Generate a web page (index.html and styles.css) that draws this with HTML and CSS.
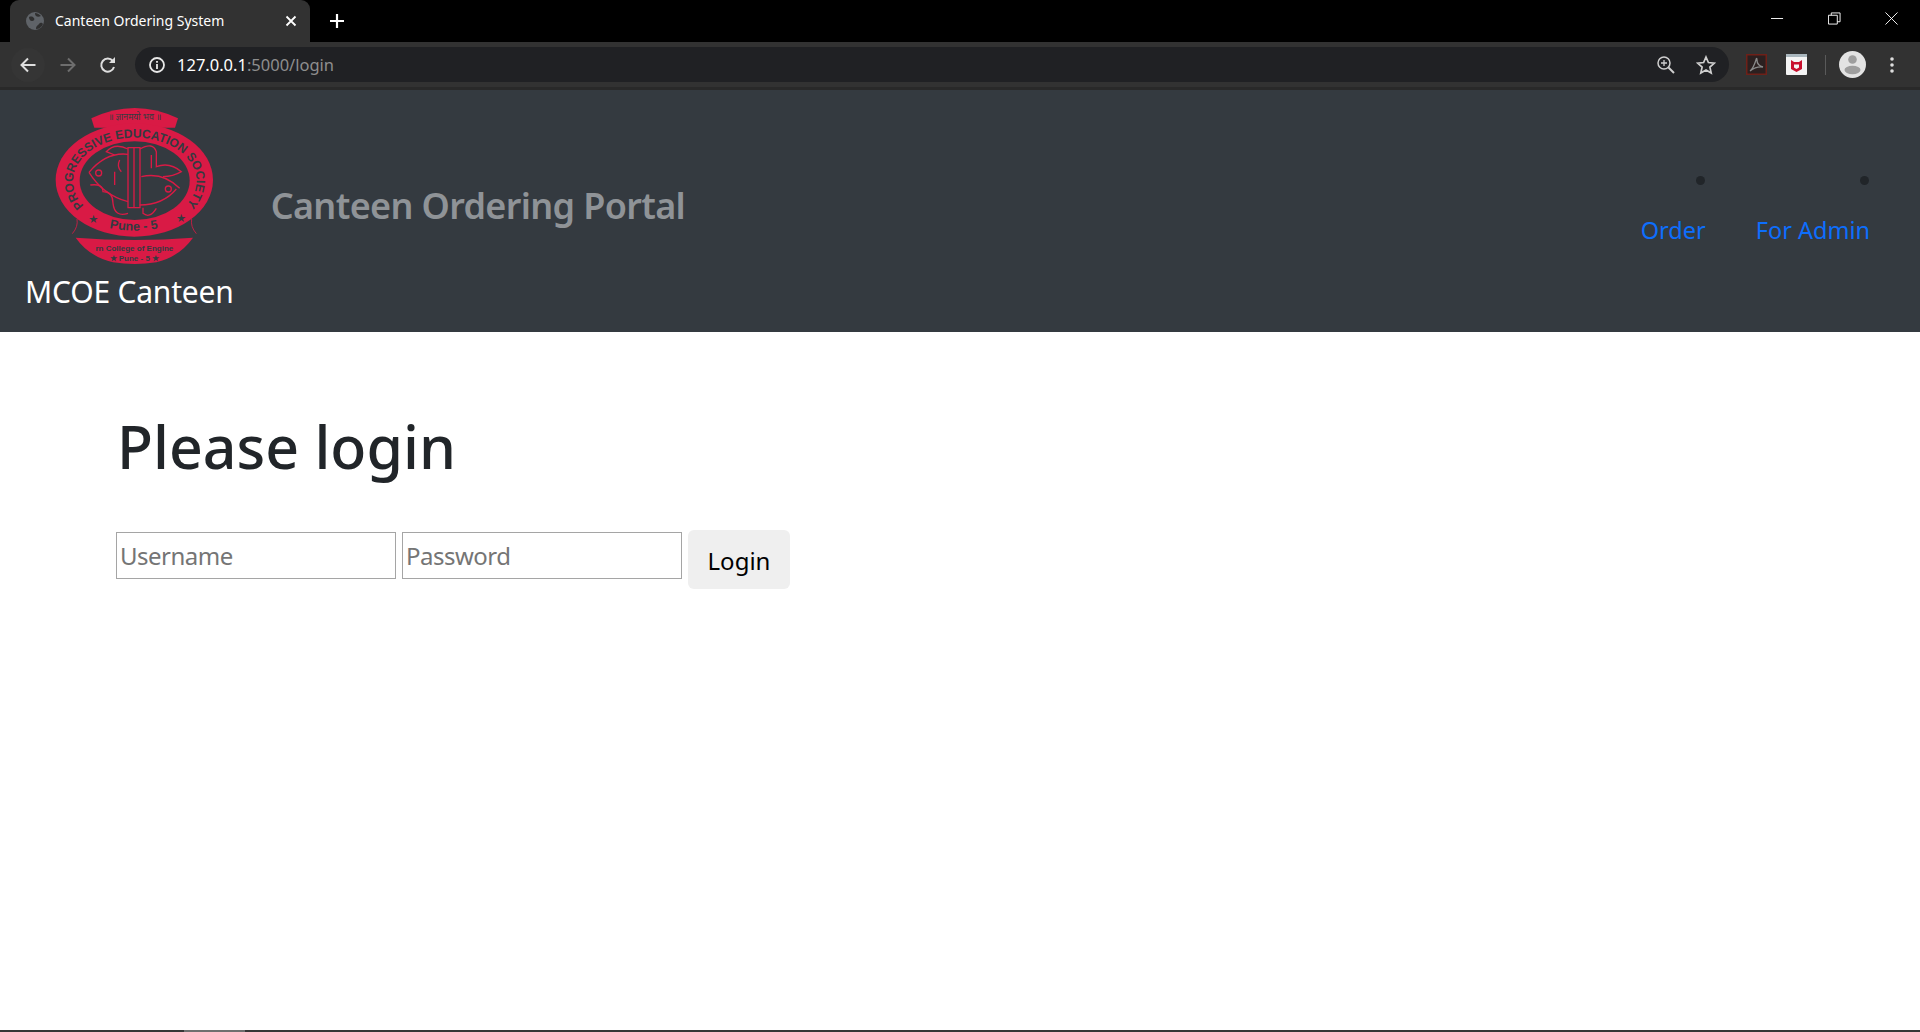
FILE: index.html
```html
<!DOCTYPE html>
<html lang="en">
<head>
    <meta charset="UTF-8">
    <title>Canteen Ordering System</title>
    <link rel="stylesheet" href="styles.css">
</head>
<body>

    <!-- Browser chrome -->
    <div class="tab-strip">
        <div class="tab">
            <svg class="favicon" viewBox="0 0 18 18"><circle cx="9" cy="9" r="9" fill="#5f6368"/><path d="M3 5c3-1 4 0 5 1s0 3-2 3-3-2-3-4zM10 17c0-3 1-3 3-5s3-1 4 0c-1 3-4 5-7 5zM9 1c2 0 4 1 6 3-2 1-4 1-5 0s-1-2-1-3z" fill="#2f2f2f"/></svg>
            <span class="tab-title">Canteen Ordering System</span>
            <svg class="tab-close" viewBox="0 0 12 12"><path d="M1.5 1.5l9 9M10.5 1.5l-9 9" stroke="#fff" stroke-width="1.8"/></svg>
        </div>
        <svg class="new-tab" viewBox="0 0 16 16"><path d="M8 1v14M1 8h14" stroke="#fff" stroke-width="2.2"/></svg>
        <div class="window-controls">
            <svg viewBox="0 0 14 14"><path d="M0 7h13" stroke="#fff"/></svg>
            <svg viewBox="0 0 14 14"><path d="M.5 3.500h9.500v9.500h-9.500zM3.500 3.500v-2.500h9.500v9.500h-3" fill="none" stroke="#fff"/></svg>
            <svg viewBox="0 0 14 14"><path d="M.5.5l13 13M13.500.5l-13 13" stroke="#fff"/></svg>
        </div>
    </div>

    <div class="toolbar">
        <div class="back-btn">
            <svg class="tool-icon" viewBox="0 0 18 18"><path d="M16.500 9h-14M9 2.500L2.500 9 9 15.500" fill="none" stroke="#dedede" stroke-width="2"/></svg>
        </div>
        <svg class="tool-icon forward" viewBox="0 0 18 18"><path d="M1.500 9h14M9 2.500L15.500 9 9 15.500" fill="none" stroke="#6e6e6e" stroke-width="2"/></svg>
        <svg class="tool-icon reload" viewBox="0 0 18 18"><path d="M15 11a6.500 6.500 0 1 1-1.200-6" fill="none" stroke="#dedede" stroke-width="2"/><path d="M16 1v6h-6z" fill="#dedede"/></svg>
        <div class="omnibox">
            <svg class="info-icon" viewBox="0 0 16 16"><circle cx="8" cy="8" r="7" fill="none" stroke="#e8e8e8" stroke-width="1.800"/><path d="M8 7v5M8 4v1.800" stroke="#e8e8e8" stroke-width="1.800"/></svg>
            <span class="url"><span class="url-host">127.0.0.1</span>:5000/login</span>
            <svg class="zoom-icon" viewBox="0 0 18 18"><circle cx="7" cy="7" r="6" fill="none" stroke="#cfcfcf" stroke-width="1.500"/><path d="M11.500 11.500l5.500 5.500" stroke="#cfcfcf" stroke-width="2"/><path d="M7 4v6M4 7h6" stroke="#cfcfcf" stroke-width="1.300"/></svg>
            <svg class="star-icon" viewBox="0 0 20 20"><path d="M10 2l2.400 5.500 6 .6-4.500 4 1.300 5.900-5.200-3.100L4.800 18l1.300-5.900-4.500-4 6-.6z" fill="none" stroke="#cfcfcf" stroke-width="1.700"/></svg>
        </div>
        <svg class="ext pdf" viewBox="0 0 21 21"><rect x=".75" y=".75" width="19.500" height="19.500" fill="#2b2020" stroke="#6e2018" stroke-width="1.500"/><path d="M4 17c3-2 5-8 6-11 .3-2 1-2 1 0 0 3 2 6 6 7-3-.5-8 0-13 4z" fill="none" stroke="#8a8a8a" stroke-width="1.300"/></svg>
        <svg class="ext mcafee" viewBox="0 0 21 21"><rect width="21" height="21" rx="1" fill="#f4f4f4"/><rect width="21" height="3" fill="#a9b6bd"/><path d="M5 6l3 2h5l3-2v9l-5.500 3L5 15z" fill="#c8102e"/><path d="M8 10.500h5v3l-2.500 1.500L8 13.500z" fill="#f4f4f4"/></svg>
        <div class="tool-sep"></div>
        <svg class="avatar" viewBox="0 0 27 27"><circle cx="13.500" cy="13.500" r="13.500" fill="#e3e3e3"/><circle cx="13.500" cy="8.500" r="4.300" fill="#9e9e9e"/><ellipse cx="13.500" cy="19" rx="8" ry="4.200" fill="#9e9e9e"/></svg>
        <svg class="menu-dots" viewBox="0 0 4 16"><circle cx="2" cy="2" r="1.800" fill="#dedede"/><circle cx="2" cy="8" r="1.800" fill="#dedede"/><circle cx="2" cy="14" r="1.800" fill="#dedede"/></svg>
    </div>

    <!-- Navbar -->
    <nav class="navbar">
        <a href="#" class="brand">
            <svg class="logo" viewBox="160 50 480 480">
                <defs>
                    <path id="ring-path" d="M253 352A185 130 0 1 1 557 352"/>
                    <path id="pune-path" d="M300 412Q405 442 510 412"/>
                </defs>
                <path d="M275 90Q405 28 535 90L526 118H284z" fill="#d91a45"/>
                <text x="405" y="96" class="logo-motto" text-anchor="middle">॥ ज्ञानमयो भव ॥</text>
                <path d="M218 436Q236 415 232 392M590 436Q572 415 576 392" fill="none" stroke="#d91a45" stroke-width="2.500"/>
                <ellipse cx="404" cy="275" rx="236" ry="170" fill="#d91a45"/>
                <ellipse cx="405" cy="277" rx="165" ry="118" fill="#343a40"/>
                <text class="logo-ring"><textPath href="#ring-path" textLength="660" lengthAdjust="spacingAndGlyphs">PROGRESSIVE EDUCATION SOCIETY</textPath></text>
                <text class="logo-pune"><textPath href="#pune-path" startOffset="14%">Pune - 5</textPath></text>
                <text x="281" y="405" class="logo-star" text-anchor="middle">★</text>
                <text x="544" y="400" class="logo-star" text-anchor="middle">★</text>
                <path d="M228 448Q404 462 580 448Q540 505 470 522Q405 532 340 522Q268 505 228 448z" fill="#d91a45"/>
                <text x="404" y="487" class="logo-college" text-anchor="middle">rn College of Engine</text>
                <text x="404" y="517" class="logo-college" text-anchor="middle">★ Pune - 5 ★</text>
                <g fill="none" stroke="#d91a45" stroke-width="4">
                    <path d="M268 252Q320 190 385 198M268 252Q310 320 385 340"/>
                    <circle cx="297" cy="254" r="9"/>
                    <path d="M540 300Q490 250 425 265M530 302Q490 350 420 350"/>
                    <circle cx="506" cy="302" r="9"/>
                    <path d="M385 178h36v180h-36zM403 178v180"/>
                    <path d="M385 182Q345 162 320 190L345 200M421 182Q460 160 470 190V235Q510 220 545 250Q520 265 490 265"/>
                    <path d="M272 290Q310 285 310 310Q340 310 340 345Q345 388 385 375M430 358V375Q450 392 470 360M455 200V240"/>
                    <path d="M345 250V290M360 215Q350 235 365 250"/>
                </g>
            </svg>
            <span class="brand-name">MCOE Canteen</span>
        </a>
        <h4 class="portal-title">Canteen Ordering Portal</h4>
        <ul class="nav-list">
            <li class="nav-item"><span class="dot"></span><a href="#">Order</a></li>
            <li class="nav-item"><span class="dot"></span><a href="#">For Admin</a></li>
        </ul>
    </nav>

    <!-- Login -->
    <main class="login-section">
        <h1>Please login</h1>
        <form class="login-form">
            <input type="text" placeholder="Username">
            <input type="password" placeholder="Password">
            <button type="button">Login</button>
        </form>
    </main>

    <div class="bottom-bar"><div class="bottom-thumb"></div></div>

</body>
</html>
```

FILE: styles.css
```css
/* General styles */
html, body {
    height: 100%;
}

body {
    margin: 0;
    display: flex;
    flex-direction: column;
    overflow: hidden;
    font-family: "Noto Sans", "Open Sans", sans-serif;
    background-color: #fff;
}

svg {
    display: block;
    flex: none;
}

/* Browser chrome */
.tab-strip {
    height: 42px;
    display: flex;
    align-items: flex-end;
    padding-left: 10px;
    background-color: #000;
}

.tab {
    width: 300px;
    height: 42px;
    box-sizing: border-box;
    padding: 0 13px 0 16px;
    display: flex;
    align-items: center;
    background-color: #323232;
    border-radius: 9px 9px 0 0;
}

.favicon {
    width: 18px;
    height: 18px;
}

.tab-title {
    margin: -1px 0 0 11px;
    flex: 1;
    color: #fff;
    font-size: 14px;
    white-space: nowrap;
}

.tab-close {
    width: 12px;
    height: 12px;
}

.new-tab {
    width: 16px;
    height: 16px;
    margin: 0 0 13px 19px;
}

.window-controls {
    margin-left: auto;
    align-self: flex-start;
    display: flex;
    gap: 44px;
    padding: 12px 22px 0 0;
}

.window-controls svg {
    width: 13px;
    height: 13px;
}

.toolbar {
    height: 45px;
    display: flex;
    align-items: center;
    padding-left: 11px;
    background-color: #323232;
    border-bottom: 3px solid #292929;
}

.back-btn {
    width: 34px;
    height: 34px;
    display: flex;
    align-items: center;
    justify-content: center;
    border-radius: 50%;
    background-color: #353535;
}

.tool-icon {
    width: 18px;
    height: 18px;
}

.forward {
    margin-left: 14px;
}

.reload {
    margin-left: 22px;
}

.omnibox {
    width: 1594px;
    height: 35px;
    margin-left: 18px;
    padding: 0 13px 0 14px;
    box-sizing: border-box;
    display: flex;
    align-items: center;
    background-color: #202124;
    border-radius: 18px;
}

.info-icon {
    width: 16px;
    height: 16px;
}

.url {
    margin-left: 12px;
    flex: 1;
    font-size: 16.500px;
    color: #8e8e8e;
}

.url-host {
    color: #fff;
}

.zoom-icon {
    width: 18px;
    height: 18px;
}

.star-icon {
    width: 20px;
    height: 20px;
    margin-left: 21px;
}

.ext {
    width: 21px;
    height: 21px;
}

.pdf {
    margin-left: 17px;
}

.mcafee {
    margin-left: 19px;
}

.tool-sep {
    width: 1px;
    height: 20px;
    margin-left: 18px;
    background-color: #5a5a5a;
}

.avatar {
    width: 27px;
    height: 27px;
    margin-left: 13px;
}

.menu-dots {
    width: 4px;
    height: 16px;
    margin-left: 24px;
}

/* Navbar */
.navbar {
    height: 242px;
    display: flex;
    align-items: center;
    padding: 0 50px 0 25px;
    background-color: #343a40;
}

.brand {
    display: flex;
    flex-direction: column;
    text-decoration: none;
    margin-top: -3px;
}

.logo {
    width: 160px;
    height: 160px;
    margin: 0 0 5px 28px;
}

.logo-ring {
    font: bold 37px "Liberation Sans", sans-serif;
    fill: #343a40;
}

.logo-pune {
    font: bold 38px "Liberation Sans", sans-serif;
    fill: #343a40;
}

.logo-motto {
    font: 26px "Noto Sans", "Liberation Sans", sans-serif;
    fill: #343a40;
}

.logo-star {
    font: 34px "DejaVu Sans", sans-serif;
    fill: #343a40;
}

.logo-college {
    font: bold 24px "Liberation Sans", sans-serif;
    fill: #343a40;
}

.brand-name {
    font-size: 30px;
    line-height: 44px;
    color: #fff;
    letter-spacing: -0.200px;
    white-space: nowrap;
}

.portal-title {
    margin: 0 0 11px 37px;
    font-size: 36px;
    font-weight: 600;
    letter-spacing: -0.650px;
    color: #8f9397;
    white-space: nowrap;
}

.nav-list {
    list-style: none;
    margin: 2px 0 0 auto;
    padding: 0;
    display: flex;
    gap: 50px;
}

.nav-item {
    display: flex;
    flex-direction: column;
    align-items: flex-end;
}

.dot {
    width: 9px;
    height: 9px;
    margin: 0 1px 27px 0;
    border-radius: 50%;
    background-color: #212529;
}

.nav-item a {
    font-size: 23.500px;
    line-height: 36px;
    color: #0d6efd;
    text-decoration: none;
    white-space: nowrap;
}

/* Login */
.login-section {
    flex: 1;
    padding: 0 116px;
}

h1 {
    margin: 78px 0 0 1px;
    font-size: 59px;
    font-weight: 500;
    line-height: 72px;
    color: #212529;
}

.login-form {
    margin-top: 48px;
    display: flex;
    align-items: flex-start;
    gap: 6px;
}

.login-form input {
    width: 280px;
    height: 47px;
    box-sizing: border-box;
    margin-top: 2px;
    padding: 0 3px;
    border: 1.500px solid #a5a5a5;
    font-family: inherit;
    font-size: 24px;
    letter-spacing: -0.500px;
    color: #212529;
    outline: none;
}

.login-form input::placeholder {
    color: #757575;
}

.login-form button {
    width: 102px;
    height: 59px;
    padding-top: 3px;
    border: none;
    border-radius: 6px;
    background-color: #efefef;
    font-family: inherit;
    font-size: 24px;
    color: #000;
}

/* Bottom edge of the window */
.bottom-bar {
    height: 2px;
    background-color: #363636;
}

.bottom-thumb {
    width: 61px;
    height: 2px;
    margin-left: 184px;
    background-color: #6f6f6f;
}
```
